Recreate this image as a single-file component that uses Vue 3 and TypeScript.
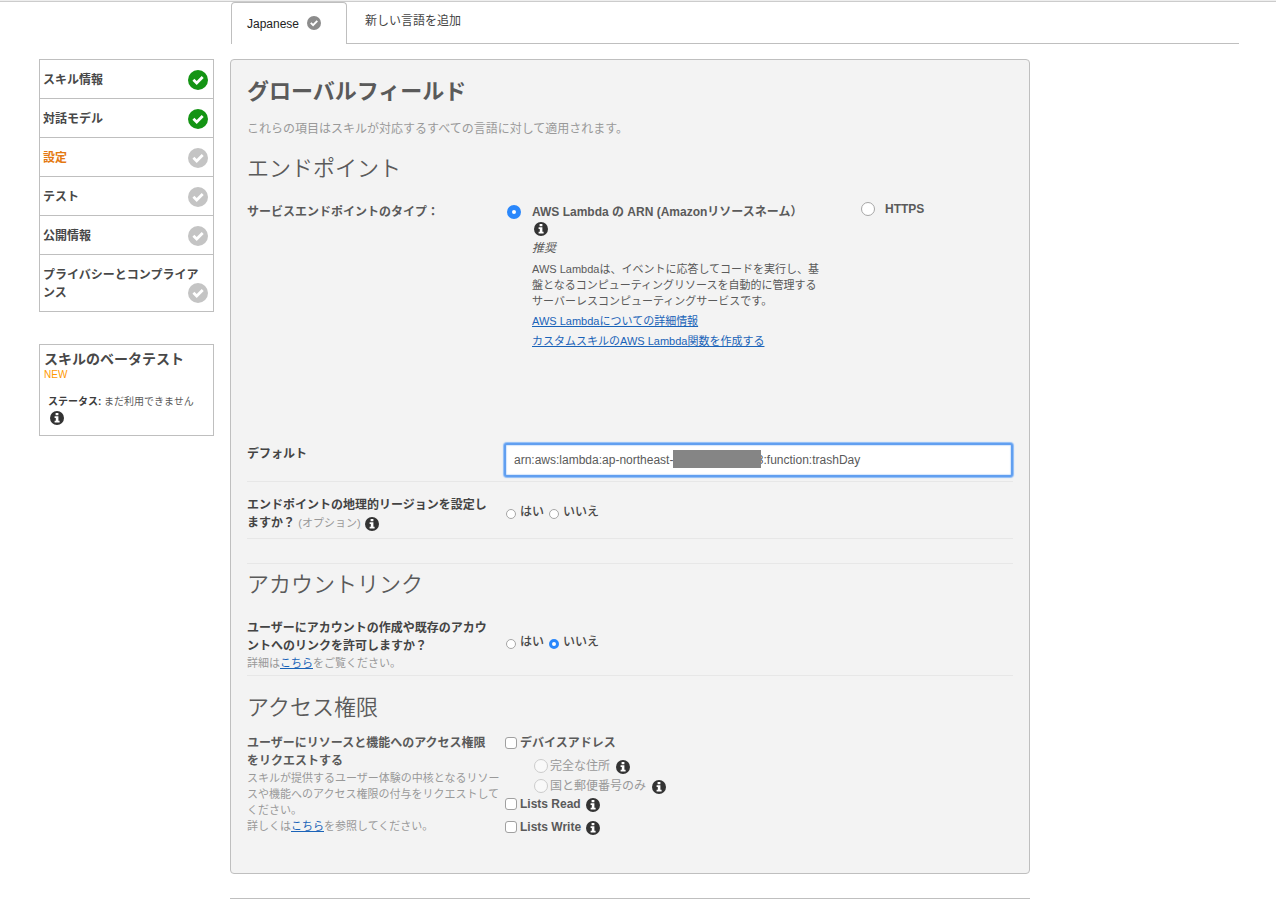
<script setup lang="ts">
import { ref } from 'vue'

interface Step {
  label: string
  state: 'done' | 'todo'
  current?: boolean
}

const steps: Step[] = [
  { label: 'スキル情報', state: 'done' },
  { label: '対話モデル', state: 'done' },
  { label: '設定', state: 'todo', current: true },
  { label: 'テスト', state: 'todo' },
  { label: '公開情報', state: 'todo' },
  { label: 'プライバシーとコンプライアンス', state: 'todo' },
]

const endpointType = ref<'lambda' | 'https'>('lambda')
const arn = ref('arn:aws:lambda:ap-northeast-1:000000000003:function:trashDay')
const regions = ref<string>('')
const linking = ref<string>('no')
const deviceAddress = ref(false)
const listsRead = ref(false)
const listsWrite = ref(false)
const addressScope = ref<string>('')
</script>

<template>
  <svg class="sprite" aria-hidden="true">
    <symbol id="check" viewBox="0 0 20 20">
      <circle cx="10" cy="10" r="10" fill="currentColor" />
      <path d="M5.4 9.8l3.3 3.2 6-6" fill="none" stroke="#fff" stroke-width="2.8" />
    </symbol>
    <symbol id="info" viewBox="0 0 14 14">
      <circle cx="7" cy="7" r="7" fill="currentColor" />
      <path d="M5.6 2h2.8v2.2H5.6zM4.6 5.2h3.8v4.6h1.2v1.7H4.6V9.8h1.2V6.9H4.6z" fill="#fff" />
    </symbol>
  </svg>
  <div class="page">
    <nav class="tabs" aria-label="言語">
      <button type="button" class="tab active">
        Japanese
        <svg class="tab-check"><use href="#check" /></svg>
      </button>
      <button type="button" class="tab add">新しい言語を追加</button>
    </nav>

    <div class="columns">
      <aside class="side">
        <nav class="steps">
          <button
            v-for="step in steps"
            :key="step.label"
            type="button"
            class="step"
            :class="{ current: step.current }"
          >
            {{ step.label }}
            <svg class="step-check" :class="step.state"><use href="#check" /></svg>
          </button>
        </nav>
        <section class="beta">
          <h2>スキルのベータテスト</h2>
          <span class="new">NEW</span>
          <p><b>ステータス:</b> まだ利用できません</p>
          <svg class="info"><use href="#info" /></svg>
        </section>
      </aside>

      <main class="main">
        <form class="panel" @submit.prevent>
          <h1>グローバルフィールド</h1>
          <p class="lead">これらの項目はスキルが対応するすべての言語に対して適用されます。</p>

          <h2>エンドポイント</h2>
          <div class="row endpoint">
            <span class="label soft">サービスエンドポイントのタイプ：</span>
            <div class="types">
              <div class="type lambda">
                <input id="type-lambda" v-model="endpointType" class="big" type="radio" name="type" value="lambda" />
                <div class="type-body">
                  <label class="soft" for="type-lambda">AWS Lambda の ARN (Amazonリソースネーム）</label>
                  <svg class="info"><use href="#info" /></svg>
                  <em>推奨</em>
                  <p>AWS Lambdaは、イベントに応答してコードを実行し、基盤となるコンピューティングリソースを自動的に管理するサーバーレスコンピューティングサービスです。</p>
                  <a href="#lambda">AWS Lambdaについての詳細情報</a>
                  <a href="#create">カスタムスキルのAWS Lambda関数を作成する</a>
                </div>
              </div>
              <div class="type https">
                <input id="type-https" v-model="endpointType" class="big" type="radio" name="type" value="https" />
                <label class="soft" for="type-https">HTTPS</label>
              </div>
            </div>
          </div>

          <div class="row default">
            <label class="label" for="arn">デフォルト</label>
            <div class="field">
              <input id="arn" v-model="arn" type="text" />
              <span class="mask"></span>
            </div>
          </div>

          <div class="row region">
            <div class="label">
              エンドポイントの地理的リージョンを設定し<br />ますか？ <small>(オプション)</small>
              <svg class="info"><use href="#info" /></svg>
            </div>
            <div class="choices">
              <label><input v-model="regions" type="radio" name="regions" value="yes" /><span>はい</span></label>
              <label><input v-model="regions" type="radio" name="regions" value="no" /><span>いいえ</span></label>
            </div>
          </div>

          <h2 class="ruled">アカウントリンク</h2>
          <div class="row linking">
            <div>
              <div class="label">ユーザーにアカウントの作成や既存のアカウントへのリンクを許可しますか？</div>
              <p class="note">詳細は<a href="#linking">こちら</a>をご覧ください。</p>
            </div>
            <div class="choices">
              <label><input v-model="linking" type="radio" name="linking" value="yes" /><span>はい</span></label>
              <label><input v-model="linking" type="radio" name="linking" value="no" /><span>いいえ</span></label>
            </div>
          </div>

          <h2 class="access">アクセス権限</h2>
          <div class="row permissions">
            <div>
              <div class="label soft">ユーザーにリソースと機能へのアクセス権限をリクエストする</div>
              <p class="note">スキルが提供するユーザー体験の中核となるリソースや機能へのアクセス権限の付与をリクエストしてください。</p>
              <p class="note">詳しくは<a href="#permissions">こちら</a>を参照してください。</p>
            </div>
            <div class="options">
              <div class="option">
                <label><input v-model="deviceAddress" type="checkbox" />デバイスアドレス</label>
              </div>
              <div class="suboptions">
                <div class="option sub">
                  <label><input v-model="addressScope" class="big" type="radio" name="scope" value="full" disabled />完全な住所</label>
                  <svg class="info"><use href="#info" /></svg>
                </div>
                <div class="option sub">
                  <label><input v-model="addressScope" class="big" type="radio" name="scope" value="zip" disabled />国と郵便番号のみ</label>
                  <svg class="info"><use href="#info" /></svg>
                </div>
              </div>
              <div class="option lists">
                <label><input v-model="listsRead" type="checkbox" />Lists Read</label>
                <svg class="info"><use href="#info" /></svg>
              </div>
              <div class="option lists">
                <label><input v-model="listsWrite" type="checkbox" />Lists Write</label>
                <svg class="info"><use href="#info" /></svg>
              </div>
            </div>
          </div>
        </form>
        <hr />
      </main>
    </div>
  </div>
</template>

<style>
body {
  background: #fff;
}
</style>

<style scoped>
.sprite {
  position: absolute;
  width: 0;
  height: 0;
}

.page {
  font: 12px/18px 'Liberation Sans', 'Noto Sans CJK JP', sans-serif;
  color: #5a5a5a;
  border-top: 1px solid #eee;
  box-shadow: inset 0 1px #ccc;
  padding-top: 1px;
}

h1,
h2,
p {
  margin: 0;
}

button {
  font: inherit;
  color: inherit;
  background: none;
  border: 0;
  cursor: pointer;
}

a {
  color: #1a63b8;
  text-decoration: underline;
}

.info {
  width: 14px;
  height: 14px;
  color: #333;
  flex: none;
}

/* Language tabs */
.tabs {
  display: flex;
  margin: 0 37px 0 231px;
  height: 42px;
  box-shadow: inset 0 -1px #bfbfbf;
}

.tab.active {
  display: flex;
  align-items: center;
  gap: 8px;
  width: 116px;
  padding: 0 15px;
  color: #222;
  background: #fff;
  border: 1px solid #bfbfbf;
  border-bottom: 0;
  border-radius: 4px 4px 0 0;
}

.tab-check {
  width: 14px;
  height: 14px;
  margin-bottom: 2px;
  color: #8c8c8c;
}

.tab.add {
  padding: 0 18px 4px;
  color: #444;
}

/* Page columns */
.columns {
  display: flex;
  align-items: flex-start;
  gap: 16px;
  margin: 15px 39px 0;
}

.side {
  flex: 0 0 175px;
}

.main {
  flex: 1;
  max-width: 800px;
}

.steps {
  border: 1px solid #bfbfbf;
}

.step {
  position: relative;
  display: block;
  width: 100%;
  padding: 11px 12px 9px 3px;
  text-align: left;
  font-weight: bold;
  color: #484848;
}

.step + .step {
  border-top: 1px solid #bfbfbf;
}

.step.current {
  color: #e47911;
}

.step-check {
  position: absolute;
  right: 5px;
  bottom: 8px;
  width: 20px;
  height: 20px;
  color: #c4c4c4;
}

.step-check.done {
  color: #149414;
}

.beta {
  margin-top: 32px;
  padding: 5px 4px 10px;
  border: 1px solid #bfbfbf;
}

.beta h2 {
  font-size: 14px;
  font-weight: bold;
  line-height: 18px;
  color: #484848;
}

.beta .new {
  display: block;
  font-size: 10px;
  line-height: 14px;
  color: #f90;
}

.beta p {
  margin: 11px 4px 0;
  font-size: 10px;
  line-height: 18px;
}

.beta b {
  color: #3c3c3c;
}

.beta .info {
  display: block;
  margin: 0 6px;
}

/* Settings panel */
.panel {
  padding: 17px 16px 38px;
  background: #f3f3f3;
  border: 1px solid #bfbfbf;
  border-radius: 4px;
}

.panel h1 {
  font-size: 22px;
  line-height: 30px;
  color: #5a5a5a;
}

.lead {
  margin-top: 13px;
  color: #999;
}

.panel h2 {
  margin-top: 16px;
  font-size: 22px;
  line-height: 30px;
  font-weight: 350;
  color: #5a5a5a;
}

.panel h2.ruled {
  margin-top: 24px;
  padding-top: 6px;
  border-top: 1px solid #e7e7e7;
}

.panel h2.access {
  margin-top: 17px;
}

.row {
  display: grid;
  grid-template-columns: 257px 1fr;
}

.label {
  max-width: 250px;
  font-weight: bold;
  color: #444;
}

.label.soft,
label.soft {
  font-weight: bold;
  color: #5a5a5a;
}

.label small {
  font-size: 11px;
  font-weight: normal;
  color: #999;
}

.label .info {
  margin-left: 4px;
  vertical-align: -4px;
}

.note {
  font-size: 11px;
  line-height: 16px;
  color: #999;
}

input {
  margin: 0;
}

input[type='radio'] {
  flex: none;
  appearance: none;
  width: 10px;
  height: 10px;
  background: #fff;
  border: 1px solid #a6a6a6;
  border-radius: 50%;
}

input[type='radio'].big {
  width: 14px;
  height: 14px;
}

input[type='radio']:checked {
  border: 3px solid #2a87fb;
}

input[type='radio'].big:checked {
  border-width: 5px;
}

input[type='radio']:disabled {
  background: #f9f9f9;
  border-color: #ccc;
}

input[type='checkbox'] {
  flex: none;
  appearance: none;
  width: 12px;
  height: 12px;
  background: #fff;
  border: 1px solid #a0a0a0;
  border-radius: 3px;
}

.endpoint {
  margin-top: 19px;
}

.types {
  display: flex;
}

.type {
  display: flex;
  align-items: flex-start;
}

.lambda {
  flex: 0 0 351px;
  gap: 11px;
  padding-left: 3px;
}

.type input {
  margin-top: 2px;
}

.type-body {
  display: flex;
  flex-direction: column;
  align-items: flex-start;
  width: 288px;
}

.type-body .info {
  margin: 1px 2px 3px;
}

.type-body em {
  line-height: 18px;
}

.type-body p {
  margin: 4px 0 2px;
  font-size: 11px;
  line-height: 16px;
}

.type-body a {
  font-size: 11px;
  line-height: 20px;
}

.https {
  align-items: center;
  align-self: flex-start;
  gap: 10px;
  padding-left: 3px;
  margin-top: -3px;
}

.https input {
  margin-top: 0;
}

.default {
  margin-top: 92px;
  padding-bottom: 4px;
  border-bottom: 1px solid #e7e7e7;
}

.default .label {
  padding-top: 2px;
}

.field {
  position: relative;
}

.field input {
  display: block;
  box-sizing: border-box;
  width: 100%;
  height: 34px;
  padding: 0 8px;
  font: inherit;
  color: #5a5a5a;
  background: #fff;
  border: 2px solid #619ff0;
  border-radius: 3px;
  box-shadow: 0 0 1px 1px #8dbcf7, inset 0 0 1px 1px #d5e6fc;
  outline: 0;
}

.mask {
  position: absolute;
  left: 169px;
  top: 7px;
  width: 88px;
  height: 18px;
  background: #858585;
}

.region {
  padding: 14px 0 6px;
  border-bottom: 1px solid #e7e7e7;
}

.choices {
  display: flex;
  gap: 5px;
  padding: 7px 0 0 2px;
}

.choices label {
  display: flex;
  align-items: flex-start;
  gap: 4px;
  height: 18px;
  font-weight: 500;
  color: #484848;
}

.choices input {
  margin-top: 6px;
}

.linking {
  margin-top: 19px;
  padding-bottom: 4px;
  border-bottom: 1px solid #e7e7e7;
}

.linking .choices {
  padding-top: 14px;
}

.permissions {
  margin-top: 11px;
}

.options {
  padding-top: 1px;
}

.option {
  display: flex;
  align-items: center;
  gap: 6px;
  height: 16px;
  padding-left: 1px;
}

.option label {
  display: flex;
  align-items: center;
  gap: 3px;
  font-weight: bold;
}

.option .info {
  margin-top: 2px;
}

.suboptions {
  padding: 5px 0 0 29px;
}

.option.sub {
  height: 20px;
}

.option.sub label {
  font-weight: normal;
  color: #999;
  gap: 2px;
}

.option.lists {
  gap: 5px;
}

.lists + .lists {
  margin-top: 7px;
}

hr {
  margin: 24px 0 0;
  border: 0;
  border-top: 1px solid #bfbfbf;
}
</style>
